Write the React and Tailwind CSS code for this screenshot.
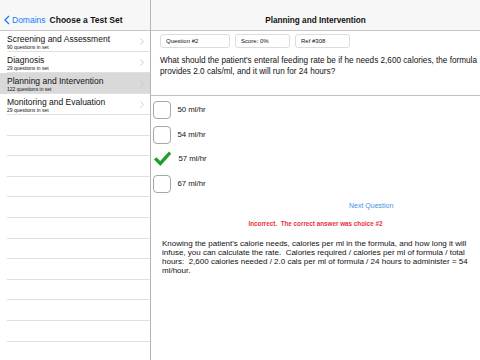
import React from 'react';

const sets = [
  { title: 'Screening and Assessment', count: 90 },
  { title: 'Diagnosis', count: 29 },
  { title: 'Planning and Intervention', count: 122, selected: true },
  { title: 'Monitoring and Evaluation', count: 29 },
];

const choices = ['50 ml/hr', '54 ml/hr', '57 ml/hr', '67 ml/hr'];

const Chevron = () => (
  <svg width="4" height="7" viewBox="0 0 4 7" className="shrink-0">
    <polyline points="0.5,0.5 3.5,3.5 0.5,6.5" fill="none" stroke="#c7c7cc" strokeWidth="0.9" />
  </svg>
);

const Check = () => (
  <svg width="20" height="18" viewBox="0 0 20 18">
    <path d="M1 9.5 L3.6 7.2 L7.6 11.2 L16.8 1.2 L19.2 3.4 L7.8 16.4 Z" fill="#1f9e28" />
  </svg>
);

export default function App() {
  return (
    <div className="flex h-[360px] w-[480px] overflow-hidden bg-white font-['Liberation_Sans',Arial,sans-serif] text-[#111]">
      {/* sidebar */}
      <div className="flex w-[151px] shrink-0 flex-col border-r border-[#b4b4b4]">
        <div className="flex h-[31px] shrink-0 items-end border-b border-[#c8c8c8] bg-[#f7f7f7] pb-[4px] pl-[4px]">
          <svg width="6" height="10" viewBox="0 0 6 10" className="mb-[1px] mr-[2px]">
            <polyline points="5,1 1,5 5,9" fill="none" stroke="#147efb" strokeWidth="1.3" />
          </svg>
          <span className="text-[8.5px] leading-[11px] text-[#147efb]">Domains</span>
          <span className="ml-[4px] text-[8.5px] font-bold leading-[11px]">Choose a Test Set</span>
        </div>
        {sets.map((s) => (
          <div key={s.title} className={`h-[21px] shrink-0 ${s.selected ? 'bg-[#d9d9d9]' : ''}`}>
            <div className="flex h-full items-center border-b border-[#e0e0e0] ml-[7px] pr-[6px]">
              <div className="flex-1 pt-[1px]">
                <div className="text-[8.5px] leading-[10px]">{s.title}</div>
                <div className="text-[5px] leading-[6px]">{s.count} questions in set</div>
              </div>
              <Chevron />
            </div>
          </div>
        ))}
        {Array.from({ length: 12 }).map((_, i) => (
          <div key={i} className="ml-[7px] h-[20.6px] shrink-0 border-b border-[#e0e0e0]" />
        ))}
      </div>

      {/* detail */}
      <div className="flex flex-1 flex-col">
        <div className="flex h-[31px] shrink-0 items-end justify-center border-b border-[#c8c8c8] bg-[#f7f7f7] pb-[4px]">
          <span className="text-[8.2px] font-bold leading-[11px]">Planning and Intervention</span>
        </div>
        <div className="h-[65px] shrink-0 border-b border-[#c0c0c0] pl-[9px] pr-[1px] pt-[3px]">
          <div className="flex gap-[5px]">
            <div className="h-[14px] w-[70px] rounded-[3px] border border-[#dcdcdc] pl-[5px] text-[6px] leading-[12px]">Question #2</div>
            <div className="h-[14px] w-[55px] rounded-[3px] border border-[#dcdcdc] pl-[5px] text-[6px] leading-[12px]">Score: 0%</div>
            <div className="h-[14px] w-[55px] rounded-[3px] border border-[#dcdcdc] pl-[5px] text-[6px] leading-[12px]">Ref #308</div>
          </div>
          <p className="mt-[7px] text-[8.2px] leading-[11px]">
            What should the patient's enteral feeding rate be if he needs 2,600 calories, the formula provides 2.0 cals/ml, and it will run for 24 hours?
          </p>
        </div>
        <div className="flex flex-col gap-[6.5px] pl-[1.5px] pt-[5px]">
          {choices.map((c, i) => (
            <div key={c} className="flex h-[18px] items-center">
              {i === 2 ? (
                <div className="flex h-[18px] w-[19px] items-center"><Check /></div>
              ) : (
                <div className="h-[18px] w-[18px] rounded-[4px] border-[1.5px] border-[#a6a6a6]" />
              )}
              <span className="ml-[7px] text-[7.8px]">{c}</span>
            </div>
          ))}
        </div>
        <div className="mt-[8px] pl-[198px] text-[7px] leading-[9px] text-[#4a90e2]">Next Question</div>
        <div className="mt-[10px] text-center text-[6.3px] font-bold leading-[8px] text-[#e8303a]">
          Incorrect.&nbsp; The correct answer was choice #2
        </div>
        <p className="mt-[11px] pl-[11px] pr-[6px] text-[8px] leading-[9px]">
          Knowing the patient's calorie needs, calories per ml in the formula, and how long it will infuse, you can calculate the rate.&nbsp; Calories required / calories per ml of formula / total hours:&nbsp; 2,600 calories needed / 2.0 cals per ml of formula / 24 hours to administer = 54 ml/hour.
        </p>
      </div>
    </div>
  );
}
